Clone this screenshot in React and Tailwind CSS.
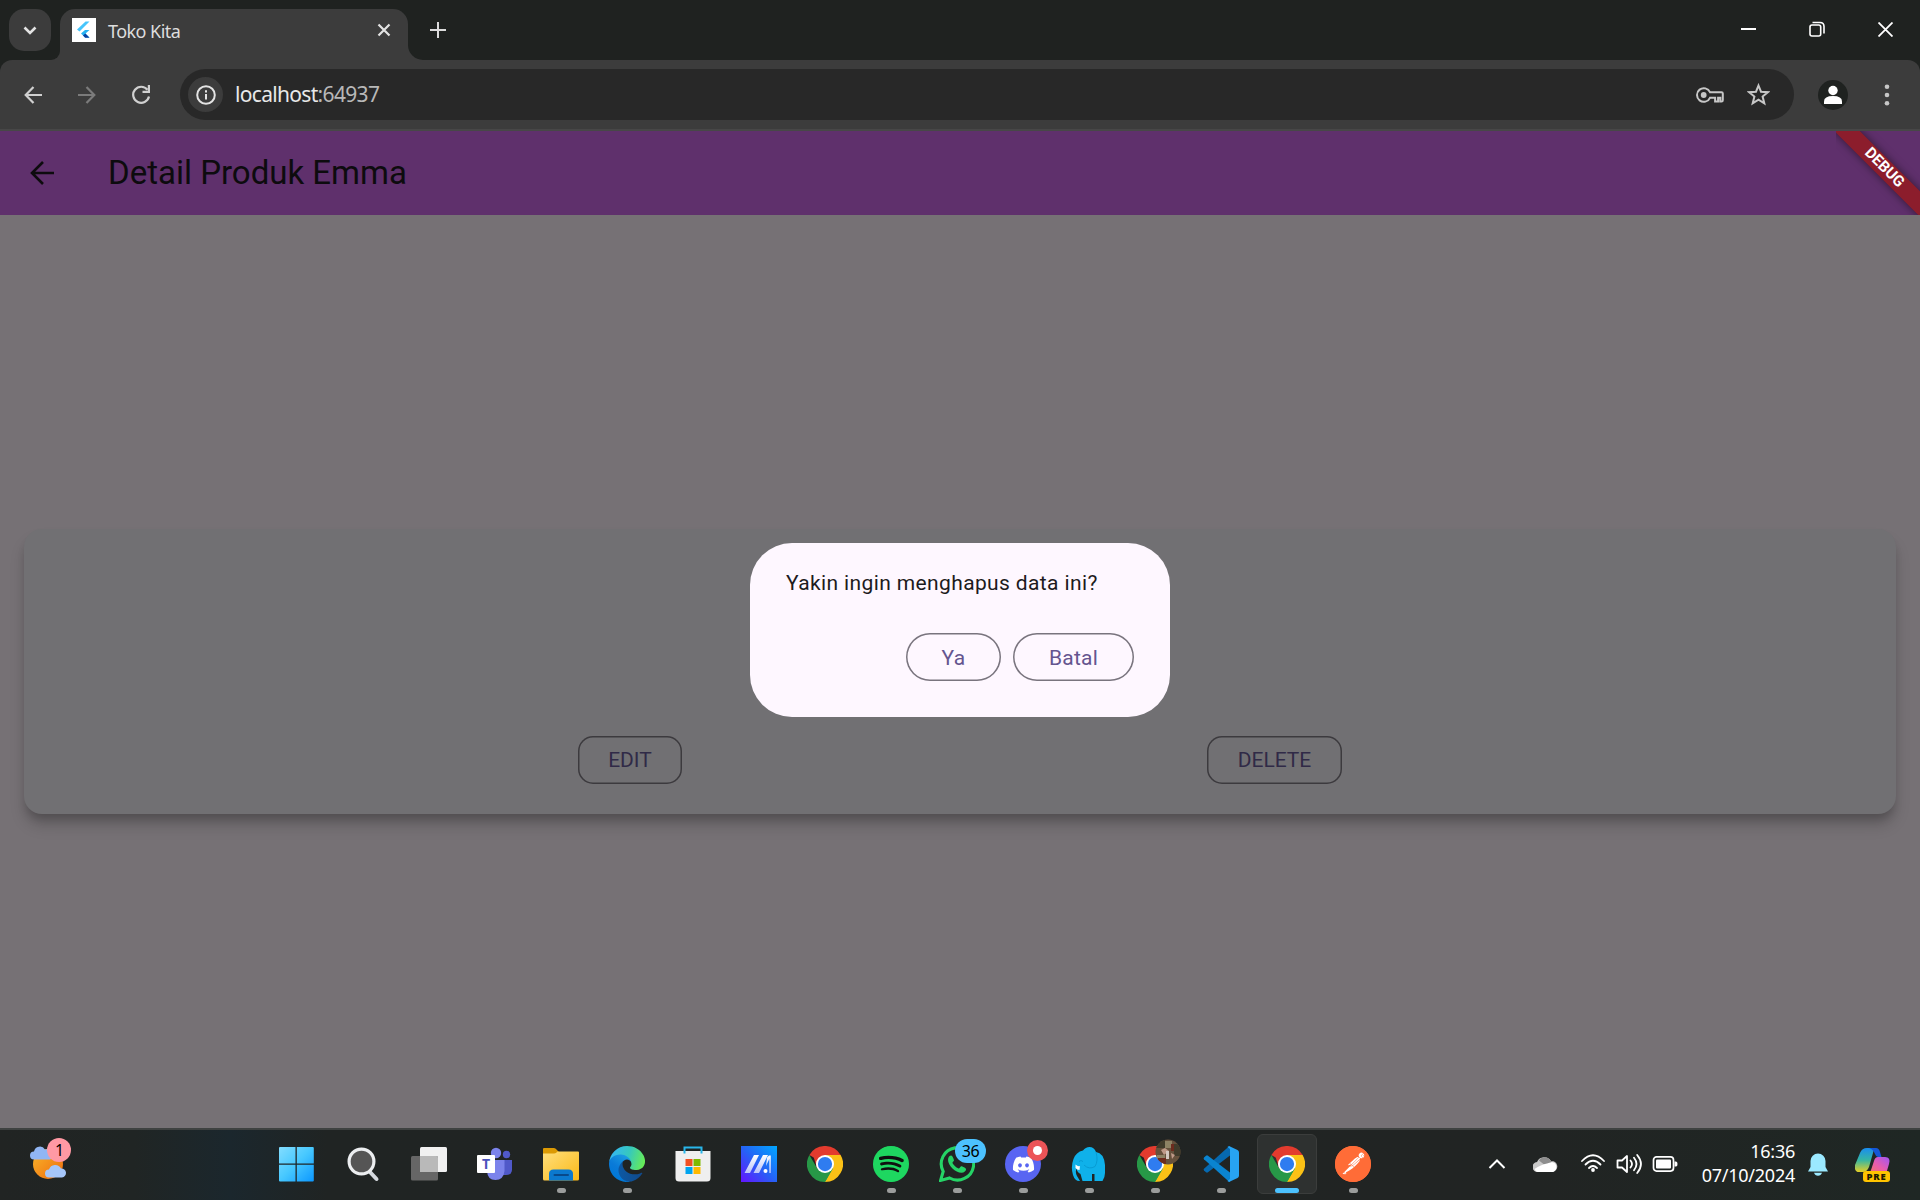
import React from "react";
import { FaDiscord, FaSpotify } from "react-icons/fa";
import { SiPostman } from "react-icons/si";

function FlutterLogo() {
  return (
    <span className="flex size-6 items-center justify-center bg-white">
      <svg width="18" height="20" viewBox="0 0 18 20" className="block">
        <path d="M2 9.500 10.500 1.500H14.500L4.500 11.500Z" fill="#47c5fb" />
        <path d="M6 13.500 10 10H14.500L10.500 13.500 14.500 17.500H10Z" fill="#27b2f2" />
        <path d="M8 15.500 10.300 13.600 14.500 17.700H10.200Z" fill="#0a3fa0" />
      </svg>
    </span>
  );
}

function TabStrip() {
  return (
    <div className="flex h-[60px] shrink-0 bg-[#1f2220]">
      <div className="ml-[9px] mt-[9px] flex size-[42px] items-center justify-center rounded-[15px] bg-[#3c3c3c]">
        <svg width="14" height="9" viewBox="0 0 14 9" fill="none" stroke="#e3e3e3" strokeWidth="2.6"><path d="m1.5 1.5 5.500 5.500L12.500 1.500" /></svg>
      </div>
      <div className="mt-[9px] flex w-[9px] items-end overflow-hidden bg-[#3c3c3c]">
        <div className="h-[51px] w-[9px] rounded-br-[15px] bg-[#1f2220]" />
      </div>
      <div className="mt-[9px] flex w-[348px] items-center rounded-t-[15px] bg-[#3c3c3c] pb-[9px] pl-3 pr-[17px]">
        <FlutterLogo />
        <span className="ml-3 flex-1 pt-[2px] font-['Noto_Sans'] text-[18px] leading-6 tracking-[-0.550px] text-[#dedede]">Toko Kita</span>
        <svg width="14" height="14" viewBox="0 0 14 14" fill="none" stroke="#e3e3e3" strokeWidth="2.2"><path d="m1.500 1.500 11 11m0-11-11 11" /></svg>
      </div>
      <div className="mt-[45px] h-[15px] w-[15px] bg-[#3c3c3c]"><div className="size-full rounded-bl-[15px] bg-[#1f2220]" /></div>
      <svg className="ml-[7px] mt-[22px]" width="16" height="16" viewBox="0 0 16 16" fill="none" stroke="#dcdcdc" strokeWidth="2"><path d="M8 0v16M0 8h16" /></svg>
      <div className="flex-1" />
      <svg className="mr-[53px] mt-[22px]" width="15" height="15" viewBox="0 0 15 15" stroke="#fff" strokeWidth="2"><path d="M0 7h15" /></svg>
      <svg className="mr-[53px] mt-[21px]" width="16" height="16" viewBox="0 0 16 16" fill="none" stroke="#fff" strokeWidth="1.600"><rect x="1" y="4" width="10.700" height="11" rx="2" /><path d="M3.500 1.500H11q4 0 4 4V12.500" /></svg>
      <svg className="mr-[27px] mt-[22px]" width="15" height="15" viewBox="0 0 15 15" stroke="#fff" strokeWidth="1.800"><path d="m.5.5 14 14m0-14-14 14" /></svg>
    </div>
  );
}

function Toolbar() {
  return (
    <div className="h-[71px] shrink-0 bg-[#1f2220]">
      <div className="flex h-[71px] items-center rounded-t-[12px] border-b-2 border-[#474747] bg-[#3c3c3c]">
        <svg className="ml-6" width="18" height="18" viewBox="0 0 18 18" fill="none" stroke="#d0d0d0" strokeWidth="2.200"><path d="M18 9H2M9.500 1 1.700 9l7.800 8" /></svg>
        <svg className="ml-9" width="18" height="18" viewBox="0 0 18 18" fill="none" stroke="#7b7b7b" strokeWidth="2.200"><path d="M0 9h16M8.500 1l7.800 8-7.800 8" /></svg>
        <svg className="ml-9" width="18" height="19" viewBox="0 0 18 19" fill="none" stroke="#d0d0d0" strokeWidth="2.200"><path d="M15.500 4.800A8 8 0 1 0 17 11.500" /><path d="M16.900 0v6.900H10.500" /></svg>
        <div className="ml-[30px] flex h-[51px] w-[1614px] items-center rounded-full bg-[#282828] pl-2">
          <div className="flex size-[35px] items-center justify-center rounded-full bg-[#3c3c3c]">
            <svg width="20" height="20" viewBox="0 0 20 20" fill="none" stroke="#e3e3e3" strokeWidth="2"><circle cx="10" cy="10" r="8.800" /><path d="M10 9v5.500M10 5.300v2.100" /></svg>
          </div>
          <div className="ml-[12px] flex-1 pb-px font-['Noto_Sans'] text-[21px] leading-8 tracking-[-0.680px] text-[#b8b8b8]">
            <span className="text-[#e8e8e8]">localhost</span>:64937
          </div>
          <svg width="28" height="16" viewBox="0 0 28 16" fill="none" stroke="#c7c7c7" strokeWidth="2"><path d="M14 5.200h11.500q1.300 0 1.300 1.300v6.700q0 1.200-1.300 1.200h-1.200v-3.600h-2.200v3.600h-3v-3.600H14A6.800 6.800 0 1 1 14 5.200Z" /><circle cx="7.700" cy="8" r="2.900" fill="#c7c7c7" stroke="none" /></svg>
          <svg className="ml-[23px] mr-6" width="23" height="24" viewBox="0 0 23 24" fill="none" stroke="#c7c7c7" strokeWidth="2"><path d="m11.500 2.500 2.500 6.200 6.800.5-5.200 4.400 1.700 6.700-5.800-3.600-5.800 3.600 1.700-6.700-5.200-4.400 6.800-.5Z" /></svg>
        </div>
        <svg className="ml-6" width="30" height="30" viewBox="0 0 30 30"><circle cx="15" cy="15" r="15" fill="#1f2220" /><circle cx="15" cy="10.500" r="4.700" fill="#fff" /><path d="M6 24v-2.500q0-5.500 9-5.500t9 5.500V24Z" fill="#fff" /></svg>
        <svg className="ml-[36px]" width="6" height="22" viewBox="0 0 6 22" fill="#c7c7c7"><circle cx="3" cy="2.700" r="2.300" /><circle cx="3" cy="11" r="2.300" /><circle cx="3" cy="19.300" r="2.300" /></svg>
      </div>
    </div>
  );
}

function Dialog() {
  return (
    <div className="absolute left-[750px] top-[412px] flex h-[174px] w-[420px] flex-col rounded-[42px] bg-[#fef7ff] px-9 pt-6">
      <p className="h-[66px] text-[21px] leading-[32px] tracking-[0.375px] text-[#1d1b20]">Yakin ingin menghapus data ini?</p>
      <div className="flex justify-end gap-3">
        <button className="h-12 w-[95px] rounded-full pt-[3px] text-[21px] tracking-[0.300px] text-[#65558f] shadow-[inset_0_0_0_1.500px_#79747e]">Ya</button>
        <button className="h-12 w-[121px] rounded-full pt-[3px] text-[21px] tracking-[0.200px] text-[#65558f] shadow-[inset_0_0_0_1.500px_#79747e]">Batal</button>
      </div>
    </div>
  );
}

function Page() {
  return (
    <div className="relative flex h-[997px] shrink-0 flex-col overflow-hidden bg-[#767175] font-[Roboto]">
      <header className="flex h-[84px] shrink-0 items-center bg-[#5f306c]">
        <svg className="ml-[30px]" width="24" height="24" viewBox="0 0 24 24" fill="none" stroke="#0d0b0e" strokeWidth="2.600"><path d="M24 12H2.500M13 1 2 12l11 11" /></svg>
        <h1 className="ml-[54px] text-[33px] leading-10 text-[#0d0b0e]">Detail Produk Emma</h1>
      </header>
      <main className="flex flex-1 flex-col justify-center px-6">
        <section className="flex h-[285px] items-end justify-center gap-[525px] rounded-[18px] bg-[#717073] pb-[30px] shadow-[0_8px_10px_-3px_rgba(0,0,0,0.2),0_12px_15px_0_rgba(0,0,0,0.14)]">
          <button className="h-12 w-[104px] rounded-[15px] pt-px text-[21px] text-[#302a47] shadow-[inset_0_0_0_1.500px_#3c3a3e]">EDIT</button>
          <button className="h-12 w-[135px] rounded-[15px] pt-px text-[21px] text-[#302a47] shadow-[inset_0_0_0_1.500px_#3c3a3e]">DELETE</button>
        </section>
      </main>
      <div className="absolute right-0 top-0 size-[84px] overflow-hidden">
        <div className="absolute left-[-32.500px] top-[27.500px] flex h-[18px] w-[160px] rotate-45 items-center justify-center bg-[#8c1d2c] text-[15.300px] font-bold leading-none text-white shadow-[0_0_9px_rgba(0,0,0,0.5)]">DEBUG</div>
      </div>
      <Dialog />
    </div>
  );
}

function Chrome() {
  return (
    <svg width="36" height="36" viewBox="0 0 48 48">
      <path d="M3.200 12A24 24 0 0 1 44.800 12L24 24Z" fill="#e33b2e" />
      <path d="M44.800 12A24 24 0 0 1 24 48L24 24 24 12Z" fill="#fbc116" />
      <path d="M24 48A24 24 0 0 1 3.200 12L13.600 30 34.400 30Z" fill="#279847" />
      <path d="M24 12H44.800L40 8 24 4 8 12 13.600 30Z" fill="#e33b2e" />
      <path d="M24 48 34.400 30 24 24 13.600 30Z" fill="#279847" />
      <circle cx="24" cy="24" r="12" fill="#fff" />
      <circle cx="24" cy="24" r="9.500" fill="#2f7cf0" />
    </svg>
  );
}

function Windows() {
  return (
    <svg width="36" height="36" viewBox="0 0 36 36">
      <defs><linearGradient id="win" x1="0" y1="0" x2="35" y2="35" gradientUnits="userSpaceOnUse"><stop stopColor="#85deff" /><stop offset=".5" stopColor="#47c8ff" /><stop offset="1" stopColor="#0c98ff" /></linearGradient></defs>
      <path fill="url(#win)" d="M1 1H16.500v16.500H0V2q0-1 1-1ZM17.800 1h16q1 0 1 1v15.500h-17ZM0 18.800H16.500V35.500H1q-1 0-1-1ZM17.800 18.800h17v15.700q0 1-1 1h-16Z" />
    </svg>
  );
}

function Search() {
  return (
    <svg width="36" height="36" viewBox="0 0 36 36" fill="none"><path d="m24 25 7.500 8" stroke="#d5d9df" strokeWidth="4" strokeLinecap="round" /><circle cx="16.500" cy="15.500" r="12.400" fill="#555" stroke="#eceef0" strokeWidth="3.200" /></svg>
  );
}

function TaskView() {
  return (
    <svg width="36" height="36" viewBox="0 0 36 36"><rect x="9" y="1" width="27" height="25" rx="1.500" fill="#f1f1f1" /><rect y="10" width="27" height="24.500" rx="1.500" fill="#666" /><path d="M9 10h16.500q1.500 0 1.500 1.500V26H9Z" fill="#b9b9b9" /></svg>
  );
}

function Teams() {
  return (
    <svg width="36" height="36" viewBox="0 0 36 36">
      <circle cx="29.500" cy="8.500" r="3.700" fill="#5059c9" /><path d="M22 14h13v10q-.5 5-6 5h-3Z" fill="#5059c9" />
      <circle cx="19" cy="7" r="5.200" fill="#7b83eb" /><path d="M10 14h17.500v11q-1 9-9 9t-8.500-9Z" fill="#7b83eb" />
      <rect y="9" width="18" height="18" rx="1" fill="#fff" />
      <text x="9" y="23" textAnchor="middle" fontFamily="Open Sans" fontWeight="700" fontSize="14" fill="#4b53bc">T</text>
    </svg>
  );
}

function Explorer() {
  return (
    <svg width="36" height="36" viewBox="0 0 36 36">
      <defs><linearGradient id="fold" x1="0" y1="0" x2="1" y2="1"><stop stopColor="#ffdf7c" /><stop offset="1" stopColor="#fbb917" /></linearGradient></defs>
      <path d="M0 3q0-1 1-1h10q1.500 0 2.500 1.500L16 6v4H0Z" fill="#dc9a04" /><path d="M0 7.500h11q1.500 0 2.500-1l1-1H35q1 0 1 1V33q0 1.500-1.500 1.500h-33Q0 34.500 0 33Z" fill="url(#fold)" />
      <path d="M6 34.500V28q0-4.500 4.500-4.500h15Q30 23.500 30 28v6.500Z" fill="#0b79ce" /><path d="M11.500 29h13.500" stroke="#08498a" strokeWidth="2" strokeLinecap="round" />
    </svg>
  );
}

function Edge() {
  return (
    <svg width="36" height="36" viewBox="0 0 256 256">
      <defs>
        <linearGradient id="edgeA" x1="60" y1="175" x2="240" y2="175" gradientUnits="userSpaceOnUse"><stop stopColor="#0c59a4" /><stop offset="1" stopColor="#114a8b" /></linearGradient>
        <linearGradient id="edgeB" x1="140" y1="80" x2="40" y2="220" gradientUnits="userSpaceOnUse"><stop stopColor="#1b9de2" /><stop offset=".6" stopColor="#0a7ad8" /><stop offset="1" stopColor="#0078d7" /></linearGradient>
        <linearGradient id="edgeC" x1="20" y1="50" x2="245" y2="120" gradientUnits="userSpaceOnUse"><stop stopColor="#35b8f1" /><stop offset=".5" stopColor="#36c8bd" /><stop offset="1" stopColor="#66eb58" /></linearGradient>
      </defs>
      <path fill="url(#edgeA)" d="M231 190.500c-3.400 1.800-6.900 3.400-10.500 4.700a101.500 101.500 0 0 1-35.900 6.400c-47.300 0-88.500-32.500-88.500-74.300 0-11.400 6.400-21.900 16.400-27.300-42.800 1.800-53.800 46.400-53.800 72.500 0 73.900 68.100 81.400 82.800 81.400 7.900 0 19.800-2.300 27-4.600l1.300-.4a128.300 128.300 0 0 0 66.600-52.800 4 4 0 0 0-5.400-5.600z" />
      <path fill="url(#edgeB)" d="M105.700 241.400a79.200 79.200 0 0 1-22.700-21.300 80.700 80.700 0 0 1 29.500-120c3.200-1.500 8.500-4.100 15.600-4a32.400 32.400 0 0 1 25.700 13 31.900 31.900 0 0 1 6.300 18.700c0-.2 24.500-79.600-80-79.600-43.900 0-80 41.700-80 78.200 0 19.300 4.300 38.400 12.300 55.900a128 128 0 0 0 156.400 67.100 75.500 75.500 0 0 1-63.100-8z" />
      <path fill="url(#edgeC)" d="M152.300 148.900c-.8 1-3.300 2.500-3.300 5.700 0 2.600 1.700 5.200 4.800 7.300 14.400 10.100 41.700 8.700 41.700 8.700 10.800 0 21.200-2.900 30.300-8.400a61.400 61.400 0 0 0 30.400-52.900c.3-22.400-8-37.300-11.300-43.900C223.500 24 177.700 0 128 0A128 128 0 0 0 0 126.200c.5-36.500 36.800-66 80-66 3.500 0 23.500.4 42 10.100 16.400 8.600 24.900 19 30.800 29.300 6.200 10.600 7.300 24.100 7.300 29.500 0 5.400-2.700 13.300-7.800 19.800z" />
    </svg>
  );
}

function Store() {
  return (
    <svg width="36" height="36" viewBox="0 0 36 36">
      <path d="M.5 5h35v27q0 3.500-3.500 3.500H4Q.500 35.500.5 32Z" fill="#efefef" /><path d="M9.500 7.500v-6h17v6" fill="none" stroke="#29b6ea" strokeWidth="2" />
      <path d="M10.500 13h7v7h-7Z" fill="#f25022" /><path d="M18.500 13h7v7h-7Z" fill="#7fba00" /><path d="M10.500 21h7v7h-7Z" fill="#00a4ef" /><path d="M18.500 21h7v7h-7Z" fill="#ffb900" />
    </svg>
  );
}

function Armoury() {
  return (
    <svg width="36" height="36" viewBox="0 0 36 36">
      <defs><linearGradient id="arm" x1="0" y1="1" x2="1" y2="0"><stop stopColor="#6414ff" /><stop offset=".5" stopColor="#2563f5" /><stop offset="1" stopColor="#00a8ff" /></linearGradient><linearGradient id="armw" x1="0" y1="0" x2="0" y2="1"><stop stopColor="#fff" /><stop offset="1" stopColor="#b9c2fa" /></linearGradient></defs>
      <path d="M0 0h36v36H0Z" fill="url(#arm)" />
      <path d="M13 9h5L9 27H3.500ZM22 9h5l-9 18h-5.500ZM26 11.500 28 9.500h1.800V27h-1.500V13L25 20Z" fill="url(#armw)" /><circle cx="24.500" cy="25" r="2" fill="#fff" />
    </svg>
  );
}

function Spotify() {
  return <span className="flex size-[36px] items-center justify-center rounded-full bg-[radial-gradient(circle,#101010_60%,#1ed760_62%)]"><FaSpotify size={36} color="#1ed760" /></span>;
}

function WhatsApp() {
  return (
    <>
      <svg width="36" height="36" viewBox="0 0 36 36" fill="none"><path d="M1.600 34.400 4.200 25.500A16.200 16.200 0 1 1 10.600 32Z" stroke="#25d366" strokeWidth="3.100" /><path d="M12.200 9.500c-1.500 0-3.200 1.600-3.200 4.200 0 6 7.500 13 13.500 13 2.700 0 4.600-1.700 4.600-3.700 0-.9-4.200-3-5-2.800-.8.200-1.500 2.300-2.400 2.300-1.200 0-6.200-4.200-6.200-5.800 0-.8 1.500-1.500 1.500-2.400 0-.6-1.500-4.800-2.800-4.800Z" fill="#25d366" /></svg>
      <span className="absolute left-[28px] top-[5px] flex h-6 w-[31px] items-center justify-center rounded-full bg-[#4cc2ff] font-['Noto_Sans'] text-[16px] tracking-[-0.300px] text-black">36</span>
    </>
  );
}

function Discord() {
  return (
    <>
      <span className="flex size-9 items-center justify-center rounded-full bg-[#5865f2]"><FaDiscord size={23} color="#fff" /></span>
      <span className="absolute left-[34px] top-[6px] flex size-[21px] items-center justify-center rounded-full bg-[#ec5457]"><span className="size-[9px] rounded-full bg-white" /></span>
    </>
  );
}

function Elephant() {
  return (
    <svg width="36" height="36" viewBox="0 0 36 36"><path d="M12 4.500Q14.500 1 18.500 1 23 1 25 6q8 1 9 13v8q0 4-2.500 8h-8V28H21v7H11.500l-2-7Q6 26 5.500 22.500q-1.500 4 .5 7.500l3 5q-5 .5-7-6Q-.5 21 2.500 13 5 6 12 4.500Z" fill="#0fb1ea" /><path d="M25 6q2.500 9-1 14.500-6 3.500-11-1.500" fill="none" stroke="#0799d0" strokeWidth=".9" /><path d="M8 15.500q2-2 4 0" fill="none" stroke="#0799d0" strokeWidth=".9" /><path d="M4.500 18.500q2.500 2.500 4.500 1.500l-.5 4q-2.500 0-4-2Z" fill="#fff" /></svg>
  );
}

function ChromeProfile() {
  return (
    <>
      <Chrome />
      <svg className="absolute left-[30px] top-[5px]" width="26" height="26" viewBox="0 0 26 26"><defs><clipPath id="av"><circle cx="13" cy="13" r="12.500" /></clipPath></defs><g clipPath="url(#av)"><path d="M0 0h26v26H0Z" fill="#66513c" /><path d="M0 0h10v9H0ZM19 5h7v12h-7Z" fill="#403b2b" /><path d="M10 2h7v7h-7ZM2 16h8v4H2Z" fill="#8d8264" /><path d="m6 11 4-2 4 3-5 4ZM16 14l4 2-3 4Z" fill="#bf9a88" /><path d="M11 12h3v8h-3Z" fill="#d4c9c0" /><path d="M16 5h3v7h-3ZM3 19h8v6H3Z" fill="#6d2c1e" /></g></svg>
    </>
  );
}

function VSCode() {
  return (
    <svg width="36" height="36" viewBox="0 0 36 36"><path d="M1 24.500 3 26.300q1 .7 2 0L27 9.500V0l-1.500.7L1 22.800q-.8.800 0 1.700Z" fill="#0669b0" /><path d="M1 11.500 3 9.700q1-.7 2 0L27 26.500V36l-1.500-.7L1 13.200q-.8-.8 0-1.700Z" fill="#0a84d0" /><path d="M26.500 35.800Q25 36 24.500 35L27 33V3L24.500 1q.5-1 2-.8L34.500 4Q36 4.700 36 6.500v23q0 1.800-1.500 2.500Z" fill="#27a3f2" /></svg>
  );
}

function Postman() {
  return <span className="flex size-9 items-center justify-center rounded-full bg-[radial-gradient(circle,#fff_60%,#ff6c37_62%)]"><SiPostman size={36} color="#ff6c37" /></span>;
}

const apps = [
  { id: "start", Icon: Windows }, { id: "search", Icon: Search }, { id: "taskview", Icon: TaskView },
  { id: "teams", Icon: Teams }, { id: "explorer", Icon: Explorer, open: true }, { id: "edge", Icon: Edge, open: true },
  { id: "store", Icon: Store }, { id: "armoury", Icon: Armoury }, { id: "chrome", Icon: Chrome },
  { id: "spotify", Icon: Spotify, open: true }, { id: "whatsapp", Icon: WhatsApp, open: true },
  { id: "discord", Icon: Discord, open: true }, { id: "tableplus", Icon: Elephant, open: true },
  { id: "chrome-profile", Icon: ChromeProfile, open: true }, { id: "vscode", Icon: VSCode, open: true },
  { id: "chrome-active", Icon: Chrome, active: true }, { id: "postman", Icon: Postman, open: true },
];

function TaskbarApp({ Icon, open, active }) {
  return (
    <div className="flex h-full w-[66px] justify-center pt-1">
      <div className={active ? "relative flex h-[60px] w-[60px] flex-col items-center rounded-[6px] border border-[#3b3d3c] bg-[#2e3130] pt-[11px]" : "relative flex h-[60px] w-[60px] flex-col items-center pt-3"}>
        <Icon />
        {open && <span className="mt-[6px] h-[5px] w-[9px] rounded-full bg-[#9b9d9c]" />}
        {active && <span className="mt-[6px] h-[5px] w-6 rounded-full bg-[#4cc2ff]" />}
      </div>
    </div>
  );
}

function Weather() {
  return (
    <div className="relative ml-[30px] mt-4 h-[40px] w-[42px]">
      <svg width="42" height="36" viewBox="0 0 42 36"><defs><linearGradient id="sun" x1="0" y1="0" x2="1" y2="1"><stop stopColor="#f9b62b" /><stop offset="1" stopColor="#ef6b0c" /></linearGradient></defs><circle cx="18" cy="18" r="15" fill="url(#sun)" /><path d="M4 13.500a4 4 0 0 1 0-8A6 6 0 0 1 15 3.500a5 5 0 0 1 5 10Z" fill="#91b6f4" /><path d="M19 31.500a4 4 0 0 1 0-8A6.500 6.500 0 0 1 31 22.500a4.500 4.500 0 0 1 1 9Z" fill="#a5c6fa" /></svg>
      <span className="absolute left-[17px] top-[-8px] flex size-6 items-center justify-center rounded-full bg-[#ff99a4] pl-px font-['Noto_Sans'] text-[16px] text-black">1</span>
    </div>
  );
}

function Tray() {
  return (
    <div className="flex h-full text-white">
      <svg className="mt-[28px]" width="18" height="12" viewBox="0 0 18 12" fill="none" stroke="#fff" strokeWidth="2"><path d="m1.500 10 7.500-7.500 7.500 7.500" /></svg>
      <svg className="ml-[27px] mt-[25px]" width="25" height="18" viewBox="0 0 25 18"><path d="M5 17A5 5 0 0 1 4 7 8 8 0 0 1 18 6a5.600 5.600 0 0 1 2 11Z" fill="#c9c9c9" /><path d="M6 5.500A7 7 0 0 1 18 6l3 1-8 4Z" fill="#8d8d8d" /><path d="M1.500 14Q8 9.500 14 8.500l5-1.500a5.200 5.200 0 0 1 1 10H5q-2.500 0-3.500-3Z" fill="#fff" /></svg>
      <svg className="ml-[22px] mt-[23px]" width="26" height="20" viewBox="0 0 26 20" fill="none" stroke="#fff" strokeWidth="1.800" strokeLinecap="round"><path d="M2 8q11-11.500 22 0M5.500 11.500q7.500-7.500 15 0M9 15q4-4 8 0" /><circle cx="13" cy="17" r="1.900" fill="#fff" stroke="none" /></svg>
      <svg className="ml-[10px] mt-[23px]" width="26" height="22" viewBox="0 0 26 22" fill="none" stroke="#fff" strokeWidth="1.800" strokeLinecap="round" strokeLinejoin="round"><path d="M1.500 7.500h4.500L11 3v16l-5-4.500H1.500ZM14.500 7.500q3 3.500 0 7M18 4.700q5 6.300 0 12.600M21.200 2q7.500 9 0 18" /></svg>
      <svg className="ml-[10px] mt-[25px]" width="26" height="18" viewBox="0 0 26 18" fill="none"><rect x="1.500" y="1.900" width="20" height="14.200" rx="3" stroke="#fff" strokeWidth="1.700" /><rect x="4" y="4.500" width="15" height="9" rx="1" fill="#fff" /><path d="M22.500 6.500H24q1.500 0 1.500 2.500T24 11.500h-1.500Z" fill="#fff" /></svg>
      <div className="ml-[9px] mt-[9px] w-[108px] text-right font-['Noto_Sans'] text-[18px] leading-6 tracking-[-0.250px]">
        <div>16:36</div><div>07/10/2024</div>
      </div>
      <svg className="ml-[13px] mt-[22px]" width="20" height="25" viewBox="0 0 20 25" fill="#9be9ff"><path d="M2.500 9a7.500 7.500 0 0 1 15 0v6l2.500 4.500H0L2.500 15ZM6 20.700h8q-1 3-4 3t-4-3Z" /></svg>
      <div className="relative ml-[27px] mt-[18px] h-10 w-[37px]">
        <svg width="36" height="30" viewBox="0 0 36 30">
          <defs><linearGradient id="cpa" x1="0" y1="0" x2="0" y2="1"><stop stopColor="#1a8df0" /><stop offset=".5" stopColor="#35b6a4" /><stop offset="1" stopColor="#e5cf25" /></linearGradient><linearGradient id="cpb" x1="1" y1="0" x2="0" y2="1"><stop stopColor="#a056f5" /><stop offset=".5" stopColor="#e85cae" /><stop offset="1" stopColor="#f67a58" /></linearGradient></defs>
          <path d="M5 5Q7 0 12 0h10q-3 0-4 5l-4 14q-2 5-6 5H4q-5 0-4-7Z" fill="url(#cpa)" /><path d="M14 0h7q3 0 4 4l1.500 5H23q-2 0-3-3-2-5-6-6Z" fill="#1457d8" /><path d="M23 9h7q6 0 4 7l-3 10H12q3 0 4-4l3-9q1-4 4-4Z" fill="url(#cpb)" />
        </svg>
        <span className="absolute left-[8px] top-[23px] flex h-[11px] w-[27px] items-center justify-center rounded-[3px] bg-[#ffc400] font-['Open_Sans'] text-[9.500px] font-extrabold leading-none tracking-[0.800px] text-[#201c00]">PRE</span>
      </div>
    </div>
  );
}

function Taskbar() {
  return (
    <footer className="flex h-[72px] shrink-0 border-t-2 border-[#3f4241] bg-[linear-gradient(90deg,#212423_0%,#202524_7%,#1b272d_12%,#202423_17%,#212423_80%,#1f2724_100%)]">
      <Weather />
      <div className="ml-[192px] flex">{apps.map((a) => <TaskbarApp key={a.id} {...a} />)}</div>
      <div className="ml-[102px]"><Tray /></div>
    </footer>
  );
}

export default function App() {
  return (
    <div className="flex h-[1200px] w-[1920px] flex-col overflow-hidden">
      <TabStrip />
      <Toolbar />
      <Page />
      <Taskbar />
    </div>
  );
}
